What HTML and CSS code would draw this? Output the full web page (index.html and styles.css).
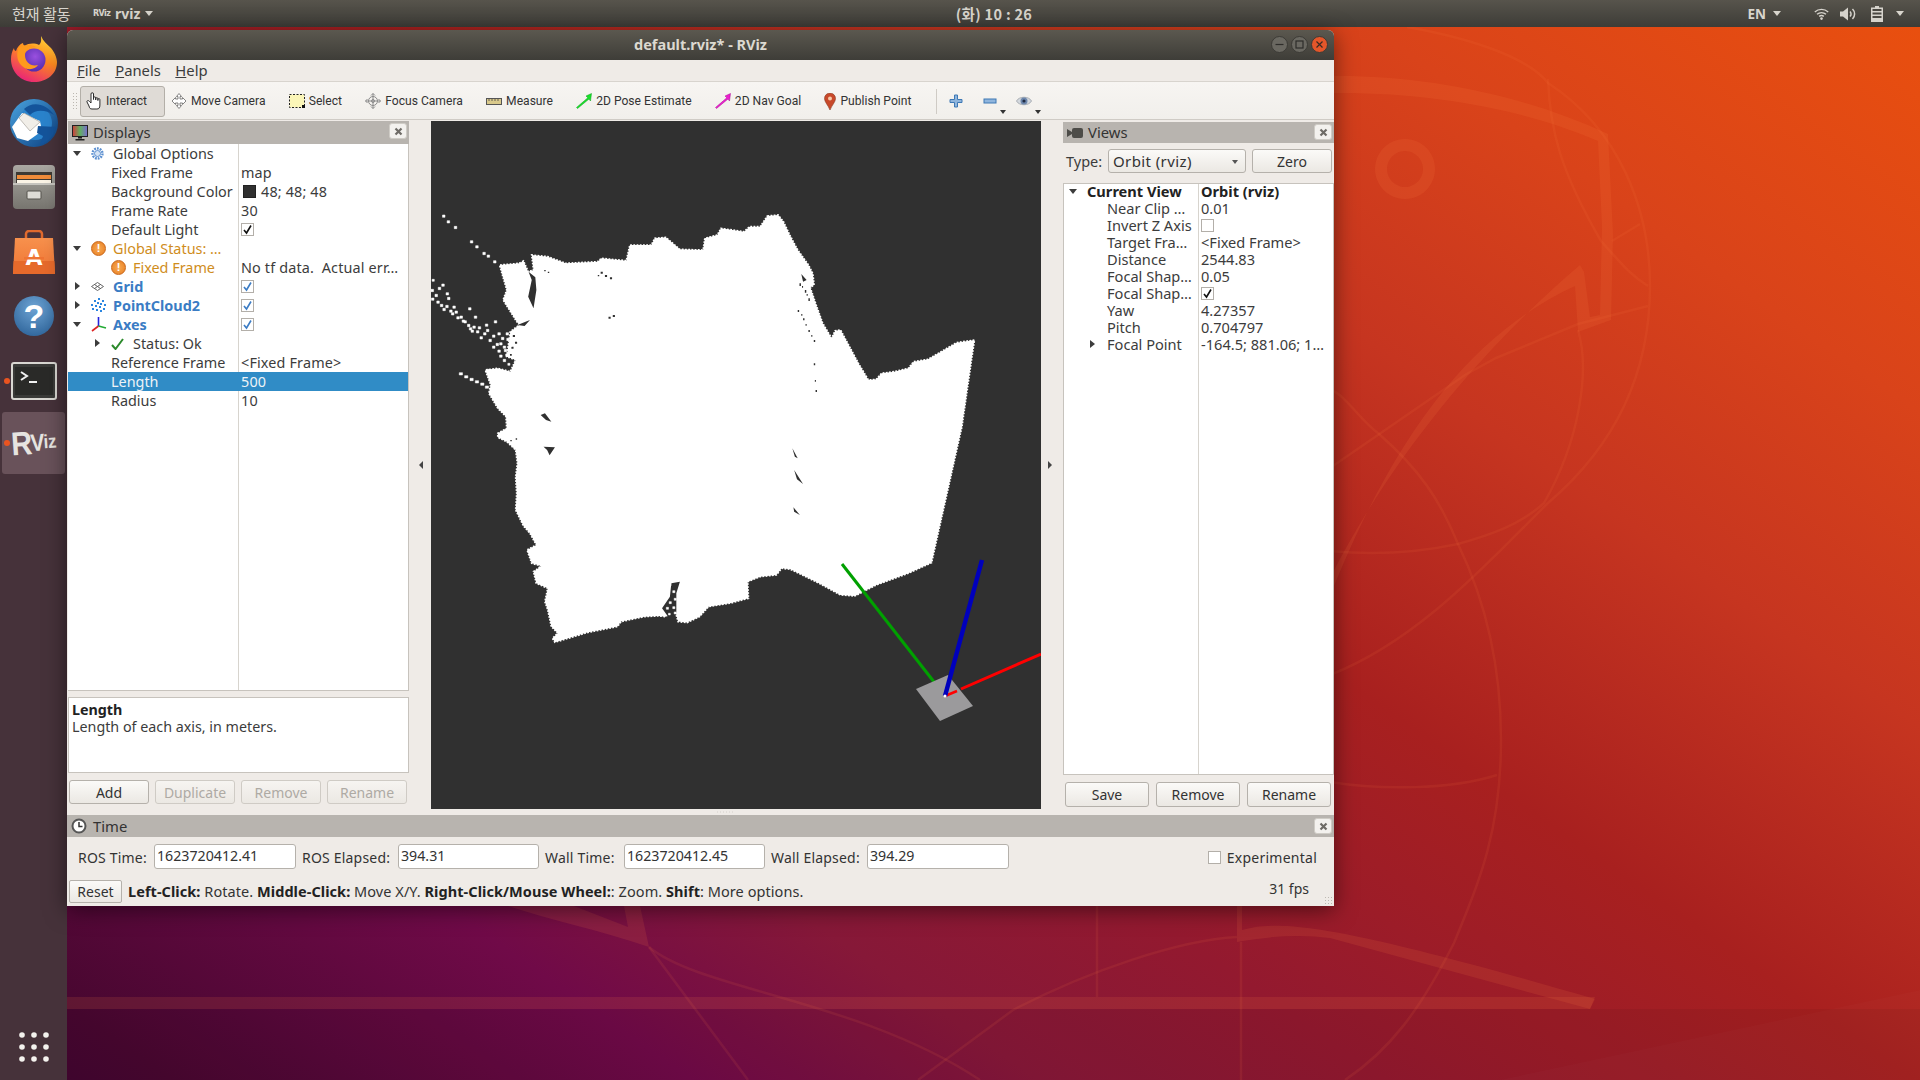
FILE: index.html
```html
<!DOCTYPE html>
<html lang="en">
<head>
<meta charset="utf-8">
<title>RViz</title>
<link rel="stylesheet" href="styles.css">
</head>
<body>
<svg class="wall" viewBox="0 0 1920 1080" width="1920" height="1080" aria-hidden="true">
  <rect x="67" y="1009" width="1853" height="71" fill="rgba(0,0,0,.05)"/>
  <path d="M1920 990L1500 1080H1920z" fill="rgba(255,255,255,.015)"/>
  <g fill="rgba(255,130,70,.13)">
    <path d="M1100 120C1280 50 1470 70 1608 134L1613 234L1611 320L1578 332L1575 286C1480 330 1400 420 1330 596L1200 640L1330 578C1390 460 1480 350 1580 265L1584 272L1590 317L1600 315L1602 227L1598 141C1480 90 1290 70 1100 130z"/>
    <path d="M508 906C560 880 600 880 574 906L628 927L624 906H640L649 947C600 930 550 920 508 906z"/>
    <path d="M1237 906H1242V930C1280 920 1330 922 1595 999L1590 1009L1330 938C1300 934 1270 936 1237 942z"/>
    <path d="M67 997H1595L1590 1009H67z"/>
    <path fill-rule="evenodd" d="M1405 139a30 30 0 1 0 .01 0zM1405 151a18 18 0 1 1 -.01 0z"/>
  </g>
  <g fill="none" stroke="rgba(255,130,70,.1)" stroke-width="2.5">
    <path d="M1407 27C1480 40 1530 60 1548 83C1620 130 1650 210 1650 286C1650 380 1610 450 1548 503C1490 560 1420 640 1330 675"/>
    <path d="M1330 389C1345 395 1360 420 1379 434C1420 470 1440 500 1458 544C1490 610 1501 680 1501 740C1501 830 1480 880 1454 943C1420 1010 1390 1050 1345 1080"/>
    <path d="M1548 79C1550 130 1560 170 1601 241C1620 262 1630 275 1648 286"/>
    <path d="M1330 468L1465 375L1496 358L1578 324L1648 306"/>
    <path d="M1612 241L1640 224"/>
    <path d="M1578 330C1590 370 1580 440 1544 503C1520 525 1490 535 1458 544C1420 552 1380 556 1330 551"/>
    <path d="M1330 782C1380 790 1450 790 1497 775"/>
    <path d="M649 947L748 1080"/>
    <path d="M649 947C700 990 860 1000 980 1080"/>
    <path d="M1237 937C1180 940 1090 970 1013 1010L918 1080"/>
    <path d="M1097 906V997"/>
    <path d="M1241 942V1080"/>
  </g>
</svg>

<header class="topbar">
  <span class="top-activities">현재 활동</span>
  <span class="top-app-logo">RViz</span>
  <span class="top-app">rviz</span>
  <i class="tri-down"></i>
  <span class="top-clock">(화) 10 : 26</span>
  <span class="top-lang">EN</span>
  <i class="tri-down tri-lang"></i>
  <svg class="top-wifi" width="15" height="12" viewBox="0 0 15 12"><g fill="none" stroke="#d6d3cc" stroke-width="1.4"><path d="M.8 4a10 10 0 0 1 13.4 0"/><path d="M3 6.3a7 7 0 0 1 9 0"/><path d="M5.2 8.4a3.6 3.6 0 0 1 4.6 0"/></g><circle cx="7.5" cy="10.6" r="1.3" fill="#d6d3cc"/></svg>
  <svg class="top-vol" width="16" height="14" viewBox="0 0 16 14"><path d="M0 4.5h3L8 .5v13l-5-4H0z" fill="#d6d3cc"/><path d="M10 4.5a3.5 3.5 0 0 1 0 5M12.5 2a7 7 0 0 1 0 10" fill="none" stroke="#d6d3cc" stroke-width="1.5"/></svg>
  <svg class="top-bat" width="12" height="16" viewBox="0 0 12 16"><path d="M4 0h4v1.500h4V16H0V1.500h4z" fill="#d6d3cc"/><path d="M1.500 3h9v2h-9zM1.500 6.500h9v2h-9zM1.500 10h9v2h-9z" fill="#4a4842"/></svg>
  <i class="tri-down tri-sys"></i>
</header>

<nav class="dock">
  <a class="dock-item dock-first">
    <svg width="46" height="47" viewBox="0 0 46 47">
      <defs>
        <linearGradient id="ff1" x1="0.8" y1="0" x2="0.3" y2="1"><stop offset="0" stop-color="#ffd93a"/><stop offset=".45" stop-color="#ff8a1f"/><stop offset="1" stop-color="#e8217a"/></linearGradient>
        <radialGradient id="ff2" cx=".55" cy=".35" r=".7"><stop offset="0" stop-color="#9a50e0"/><stop offset="1" stop-color="#4f2aa8"/></radialGradient>
      </defs>
      <path d="M30 1c2 5 6 8 10 12 5 6 6 12 6 14 0 12-10 20-23 20C10 47 0 37 0 24c0-4 1-8 3-11 0 2 1 3 2 3 1-4 4-7 7-8 0 1 1 3 2 3 3-3 10-3 14-1 3-3 2-6 2-9z" fill="url(#ff1)"/>
      <circle cx="23" cy="25" r="11.500" fill="url(#ff2)"/>
      <path d="M8 12c4-2 12-3 17 0 -5 0-11 3-11 8 0 7 6 12 13 10 -3 5-12 6-17 0C6 26 5 18 8 12z" fill="#ff9a1d"/>
    </svg>
  </a>
  <a class="dock-item">
    <svg width="48" height="48" viewBox="0 0 48 48">
      <defs><linearGradient id="tb1" x1="0" y1="0" x2="1" y2="1"><stop offset="0" stop-color="#4aa3df"/><stop offset="1" stop-color="#0b3f80"/></linearGradient></defs>
      <circle cx="24" cy="24" r="24" fill="url(#tb1)"/>
      <circle cx="25" cy="24" r="17" fill="#2a83cc"/>
      <path d="M14 10C22 2 36 4 44 16 36 11 26 10 20 16z" fill="#14549b"/>
      <path d="M2 28L12 14l18 8 2 10-7 5-7 5-11-3z" fill="#fff"/>
      <path d="M9 19l11 13 10-9-16-9z" fill="#f1eee8" stroke="#a9a59e" stroke-width=".7"/>
      <path d="M28 27l18 1c-2 9-8 15-16 18l3-9-6-3z" fill="#14549b"/>
    </svg>
  </a>
  <a class="dock-item">
    <svg width="42" height="44" viewBox="0 0 42 44">
      <defs><linearGradient id="fc1" x1="0" y1="0" x2="0" y2="1"><stop offset="0" stop-color="#aaa8a2"/><stop offset="1" stop-color="#77756f"/></linearGradient></defs>
      <rect width="42" height="44" rx="4" fill="url(#fc1)"/>
      <rect x="3" y="7" width="36" height="13" fill="#3d3a35"/>
      <rect x="4" y="10" width="34" height="4" fill="#f08c3a"/>
      <rect x="4" y="15" width="34" height="4" fill="#fbf4e6"/>
      <rect x="0" y="18" width="42" height="2" fill="#c6c4be"/>
      <rect x="14" y="26" width="14" height="8" rx="1" fill="#dedcd6" stroke="#55534d"/>
    </svg>
  </a>
  <a class="dock-item">
    <svg width="42" height="44" viewBox="0 0 42 44">
      <defs><linearGradient id="sw1" x1="0" y1="0" x2="0" y2="1"><stop offset="0" stop-color="#f7914d"/><stop offset="1" stop-color="#ef7433"/></linearGradient></defs>
      <path d="M13 9V4a3 3 0 0 1 3-3h10a3 3 0 0 1 3 3v5" fill="none" stroke="#e06a2e" stroke-width="2.500"/>
      <path d="M2 8h38l2 36H0z" fill="url(#sw1)"/>
      <path d="M.6 31h40.800l.6 13H0z" fill="#e66a2b"/>
      <text x="21" y="35" class="sw-a">A</text>
      <rect x="11" y="27" width="20" height="2.500" fill="#ef7433"/>
    </svg>
  </a>
  <a class="dock-item">
    <svg width="40" height="40" viewBox="0 0 40 40">
      <defs><radialGradient id="hp1" cx=".5" cy=".3" r=".8"><stop offset="0" stop-color="#6ea4d4"/><stop offset="1" stop-color="#2a6096"/></radialGradient></defs>
      <circle cx="20" cy="20" r="20" fill="url(#hp1)"/>
      <text x="20" y="32" class="hp-q">?</text>
    </svg>
  </a>
  <a class="dock-item dock-running">
    <svg width="46" height="38" viewBox="0 0 46 38">
      <rect x="1" y="1" width="44" height="36" rx="2" fill="#3a3a38" stroke="#d9d7d2" stroke-width="2"/>
      <rect x="4" y="5" width="38" height="28" fill="#2a2a28"/>
      <path d="M10 10l6 4-6 4" fill="none" stroke="#f1f1f1" stroke-width="2"/>
      <path d="M18 20h8" stroke="#f1f1f1" stroke-width="2"/>
    </svg>
  </a>
  <a class="dock-item dock-running dock-active">
    <span class="rviz-logo"><b class="rv-r">R</b><b class="rv-v">V</b><b class="rv-iz">iz</b></span>
  </a>
  <a class="dock-apps">
    <svg width="30" height="30" viewBox="0 0 30 30"><g fill="#f4f2ee"><circle cx="3" cy="3" r="2.800"/><circle cx="15" cy="3" r="2.800"/><circle cx="27" cy="3" r="2.800"/><circle cx="3" cy="15" r="2.800"/><circle cx="15" cy="15" r="2.800"/><circle cx="27" cy="15" r="2.800"/><circle cx="3" cy="27" r="2.800"/><circle cx="15" cy="27" r="2.800"/><circle cx="27" cy="27" r="2.800"/></g></svg>
  </a>
</nav>

<main class="window">
  <div class="titlebar">
    <span class="title">default.rviz* - RViz</span>
    <span class="wbtns">
      <svg width="17" height="17" viewBox="0 0 17 17"><circle cx="8.500" cy="8.500" r="8" fill="#6a6861" stroke="#3c3b36"/><path d="M4.500 8.500h8" stroke="#2e2d2a" stroke-width="1.200"/></svg>
      <svg width="17" height="17" viewBox="0 0 17 17"><circle cx="8.500" cy="8.500" r="8" fill="#6a6861" stroke="#3c3b36"/><rect x="5" y="5" width="7" height="7" fill="none" stroke="#2e2d2a" stroke-width="1.200"/></svg>
      <svg width="17" height="17" viewBox="0 0 17 17"><circle cx="8.500" cy="8.500" r="8" fill="#e4562a" stroke="#3c3b36"/><path d="M5.500 5.500l6 6m0-6l-6 6" stroke="#3b2a22" stroke-width="1.200"/></svg>
    </span>
  </div>

  <div class="menubar">
    <span class="menu"><u>F</u>ile</span>
    <span class="menu"><u>P</u>anels</span>
    <span class="menu"><u>H</u>elp</span>
  </div>

  <div class="toolbar">
    <i class="grip"></i>
    <span class="tool tool-on">
      <svg width="16" height="18" viewBox="0 0 16 18"><path d="M5 9V2a1.200 1.200 0 0 1 2.500 0v5.500V6a1.100 1.100 0 0 1 2.200 0v2V6.800a1.100 1.100 0 0 1 2.200 0V8.500V7.600a1 1 0 0 1 2 0V13c0 3-1 4-3 4H6c-2 0-2.500-1-3-3L1 10c-.5-1.500 1.500-2 2.500-.5L5 11z" fill="#fff" stroke="#2a2a2a" stroke-width="1"/></svg>
      Interact
    </span>
    <span class="tool">
      <svg width="16" height="16" viewBox="0 0 16 16"><g fill="#fff" stroke="#777" stroke-width=".9"><path d="M8 .5l2.500 3H9v2.500h2.500V4.500l3.500 3.500-3.500 3.500V10H9v2.500h1.500L8 15.500l-2.500-3H7V10H4.500v1.500L1 8l3.500-3.500V6H7V3.500H5.500z"/></g></svg>
      Move Camera
    </span>
    <span class="tool">
      <svg width="16" height="14" viewBox="0 0 16 14"><rect x=".5" y=".5" width="15" height="13" fill="#fbf6b8" stroke="#222" stroke-dasharray="2 1.500"/><path d="M13 11h3v3h-3z" fill="#111"/></svg>
      Select
    </span>
    <span class="tool">
      <svg width="16" height="16" viewBox="0 0 16 16"><g fill="none" stroke="#8a8a8a" stroke-width="1"><circle cx="8" cy="8" r="4.500"/><circle cx="8" cy="8" r="1.500"/><path d="M8 .5v15M.5 8h15"/><path d="M6 2.500L8 .5l2 2M6 13.500l2 2 2-2M2.500 6L.5 8l2 2M13.500 6l2 2-2 2"/></g></svg>
      Focus Camera
    </span>
    <span class="tool">
      <svg width="16" height="7" viewBox="0 0 16 7"><rect x=".5" y=".5" width="15" height="6" fill="#d9c98b" stroke="#555"/><path d="M3 1v2M6 1v2M9 1v2M12 1v2" stroke="#444" stroke-width=".8"/></svg>
      Measure
    </span>
    <span class="tool">
      <svg width="16" height="16" viewBox="0 0 16 16"><path d="M15.500.5L10 3l1.800 1.800L.5 14.500l1 1L13 6l1.500 2z" fill="#17e22a" stroke="#0f9a1c" stroke-width=".5"/></svg>
      2D Pose Estimate
    </span>
    <span class="tool">
      <svg width="16" height="16" viewBox="0 0 16 16"><path d="M15.500.5L10 3l1.800 1.800L.5 14.500l1 1L13 6l1.500 2z" fill="#ee1dd0" stroke="#a50f90" stroke-width=".5"/></svg>
      2D Nav Goal
    </span>
    <span class="tool">
      <svg width="12" height="17" viewBox="0 0 12 17"><path d="M6 17C4 12 .5 9 .5 5.500a5.500 5.500 0 0 1 11 0C11.500 9 8 12 6 17z" fill="#c8492a" stroke="#8a3a22" stroke-width=".6"/><circle cx="6" cy="5.500" r="2" fill="#f6c9a8"/></svg>
      Publish Point
    </span>
    <i class="tb-sep"></i>
    <svg class="tb-plus" width="14" height="14" viewBox="0 0 14 14"><path d="M5.500 1h3v4.500H13v3H8.500V13h-3V8.500H1v-3h4.500z" fill="#8fb5dd" stroke="#3e78b4"/></svg>
    <svg class="tb-minus" width="14" height="14" viewBox="0 0 14 14"><rect x="1" y="5" width="12" height="4" fill="#8fb5dd" stroke="#3e78b4"/></svg>
    <i class="tri-small"></i>
    <svg class="tb-eye" width="16" height="12" viewBox="0 0 16 12"><path d="M.5 6C3 1 13 1 15.500 6 13 11 3 11 .5 6z" fill="#d3d8de" stroke="#a8adb3"/><circle cx="8" cy="6" r="3.500" fill="#6d87ad"/><circle cx="8" cy="6" r="1.600" fill="#1e2a42"/></svg>
    <i class="tri-small"></i>
  </div>

  <div class="workspace">
    <section class="left-panel">
      <div class="dock-head head-left">
        <svg width="16" height="16" viewBox="0 0 16 16"><defs><linearGradient id="mon" x1="0" y1="0" x2="1" y2="0"><stop offset="0" stop-color="#d33a3a"/><stop offset=".5" stop-color="#60b060"/><stop offset="1" stop-color="#7a6ad0"/></linearGradient></defs><rect x=".5" y=".5" width="15" height="11" fill="url(#mon)" stroke="#222"/><path d="M6 12h4v1.500H6zM3.500 14h9v1.500h-9z" fill="#222"/></svg>
        <span class="head-text">Displays</span>
        <span class="close-x"><svg width="9" height="9" viewBox="0 0 9 9"><path d="M1.500 1.500l6 6m0-6l-6 6" stroke="#6e6b66" stroke-width="2.200"/></svg></span>
      </div>
      <div class="tree tree-displays">
        <div class="row"><div class="n"><i class="ar dn"></i><span class="ic"><svg width="13" height="13" viewBox="0 0 13 13"><circle cx="6.500" cy="6.500" r="5" fill="none" stroke="#5b8fd0" stroke-width="2.400" stroke-dasharray="1.800 1"/><circle cx="6.500" cy="6.500" r="3" fill="#d5e3f4" stroke="#5b8fd0"/></svg></span>Global Options</div><div class="v"></div></div>
        <div class="row"><div class="n p">Fixed Frame</div><div class="v">map</div></div>
        <div class="row"><div class="n p">Background Color</div><div class="v"><i class="swatch"></i>48; 48; 48</div></div>
        <div class="row"><div class="n p">Frame Rate</div><div class="v">30</div></div>
        <div class="row"><div class="n p">Default Light</div><div class="v"><i class="cb"><svg width="11" height="11" viewBox="0 0 11 11"><path d="M2 6l2.500 3L9 1.500" fill="none" stroke="#111" stroke-width="1.600"/></svg></i></div></div>
        <div class="row warn"><div class="n"><i class="ar dn"></i><span class="ic"><i class="warn-ic">!</i></span>Global Status: …</div><div class="v"></div></div>
        <div class="row warn"><div class="n l2"><span class="ar-blank"></span><span class="ic"><i class="warn-ic">!</i></span>Fixed Frame</div><div class="v v-dark">No tf data.&nbsp; Actual err…</div></div>
        <div class="row blue"><div class="n"><i class="ar rt"></i><span class="ic"><svg width="13" height="9" viewBox="0 0 13 9"><path d="M6.500.5L12.500 4.500 6.500 8.500.5 4.500zM3.500 2.500l6 4M9.500 2.500l-6 4" fill="none" stroke="#555" stroke-width=".9"/></svg></span>Grid</div><div class="v"><i class="cb"><svg width="11" height="11" viewBox="0 0 11 11"><path d="M2 6l2.500 3L9 1.500" fill="none" stroke="#3c7cc4" stroke-width="1.600"/></svg></i></div></div>
        <div class="row blue"><div class="n"><i class="ar rt"></i><span class="ic"><svg width="15" height="15" viewBox="0 0 15 15"><path d="M7 0h2v2H7zM3 2h2v2H3zM11 2h2v2h-2zM6 4h2v2H6zM0 6h2v2H0zM9 5h2v2H9zM13 6h2v2h-2zM4 7h2v2H4zM8 8h2v2H8zM1 10h2v2H1zM12 10h2v2h-2zM5 11h2v2H5zM9 12h2v2H9z" fill="#2b86e0"/></svg></span>PointCloud2</div><div class="v"><i class="cb"><svg width="11" height="11" viewBox="0 0 11 11"><path d="M2 6l2.500 3L9 1.500" fill="none" stroke="#3c7cc4" stroke-width="1.600"/></svg></i></div></div>
        <div class="row blue"><div class="n"><i class="ar dn"></i><span class="ic"><svg width="16" height="15" viewBox="0 0 16 15"><path d="M7.500 9V0" stroke="#2222dd" stroke-width="1.600"/><path d="M7.500 9L1 14" stroke="#dd2222" stroke-width="1.600"/><path d="M7.500 9L15 11" stroke="#22aa33" stroke-width="1.600"/></svg></span>Axes</div><div class="v"><i class="cb"><svg width="11" height="11" viewBox="0 0 11 11"><path d="M2 6l2.500 3L9 1.500" fill="none" stroke="#3c7cc4" stroke-width="1.600"/></svg></i></div></div>
        <div class="row"><div class="n l2"><i class="ar rt"></i><span class="ic"><svg width="13" height="12" viewBox="0 0 13 12"><path d="M1 7l3.500 4L12 1" fill="none" stroke="#2c8a2c" stroke-width="2"/></svg></span>Status: Ok</div><div class="v"></div></div>
        <div class="row"><div class="n p">Reference Frame</div><div class="v">&lt;Fixed Frame&gt;</div></div>
        <div class="row sel"><div class="n p">Length</div><div class="v">500</div></div>
        <div class="row"><div class="n p">Radius</div><div class="v">10</div></div>
      </div>
      <div class="desc"><b>Length</b><br>Length of each axis, in meters.</div>
      <div class="btn-row btn-row-left">
        <span class="btn">Add</span>
        <span class="btn off">Duplicate</span>
        <span class="btn off">Remove</span>
        <span class="btn off">Rename</span>
      </div>
    </section>

    <div class="gutter"><i class="tri-left"></i></div>

    <div class="viewport">
      <svg viewBox="431 121 610 688" width="610" height="688">
        <rect x="431" y="121" width="610" height="688" fill="#303030"/>
        <g transform="translate(430 200) scale(.357 .3333)">
          <path fill="#fff" stroke="#fff" stroke-width="5" stroke-dasharray="5 4" d="M945 48L975 45 990 65 1010 110 1030 150 1060 195 1072 220 1076 255 1065 262 1080 310 1100 370 1125 415 1135 392 1150 390 1170 430 1200 490 1228 540 1250 538 1265 520 1300 515 1340 505 1355 485 1395 478 1440 450 1475 428 1525 420 1510 530 1490 680 1465 800 1440 920 1405 1088 1340 1120 1250 1155 1190 1188 1150 1185 1090 1150 1010 1108 985 1105 970 1125 925 1130 890 1145 892 1195 840 1210 780 1220 755 1250 720 1268 695 1265 685 1225 660 1250 640 1248 600 1250 535 1265 525 1280 440 1298 350 1327 343 1315 358 1300 340 1280 330 1230 322 1205 330 1165 298 1150 290 1115 312 1098 285 1090 272 1050 298 1035 280 1000 262 978 240 930 243 880 240 830 245 790 240 750 215 725 190 712 190 700 215 685 213 650 190 625 165 580 170 555 155 510 190 505 225 515 240 480 215 470 225 395 250 375 240 360 205 300 215 270 195 195 250 190 262 183 275 215 290 210 285 165 330 170 380 190 470 185 480 175 550 182 560 135 620 135 630 115 660 112 700 148 765 150 770 115 805 105 815 85 880 95 895 80 925 80z"/>
          <path fill="#303030" d="M276 215L295 232 298 270 290 325 275 290 285 240zM245 375L280 360 265 378zM310 645L322 640 340 665 325 660zM318 740L350 742 335 766 328 750zM1015 745L1030 775 1022 770zM1020 810L1045 852 1028 838zM1018 922L1036 945 1020 935zM700 1145L690 1180 690 1240 670 1255 650 1225 672 1190 676 1150zM1040 222L1055 240 1045 245zM478 215h6v6h-6zM490 225h6v6h-6zM504 232h6v6h-6zM500 350h6v6h-6zM512 345h6v6h-6zM1035 250h4v8h-4zM1050 270h4v8h-4zM1060 295h4v8h-4zM1030 330h4v6h-4zM1045 355h4v6h-4zM1060 390h4v6h-4zM1075 420h4v6h-4zM1075 490h4v6h-4zM1080 570h4v6h-4zM228 440h6v6h-6zM238 425h6v6h-6zM232 405h6v6h-6zM224 462h5v5h-5zM1042 258h3v5h-3zM1055 282h3v5h-3zM1040 342h3v5h-3zM1052 372h3v5h-3zM1068 405h3v5h-3zM1078 540h3v5h-3zM470 225h4v4h-4zM320 210h4v4h-4zM330 215h4v4h-4zM240 715h4v4h-4zM225 720h4v4h-4z"/>
          <path fill="#fff" stroke="#fff" stroke-width="1.500" d="M35 45h7v7h-7zM48 62h7v7h-7zM68 79h7v7h-7zM113 122h7v7h-7zM128 137h7v7h-7zM148 157h7v7h-7zM160 165h7v7h-7zM178 182h7v7h-7zM6 238h6v6H6zM33 252h7v7h-7zM23 262h7v7h-7zM3 268h7v7H3zM14 283h7v7h-7zM4 294h7v7H4zM45 278h7v7h-7zM19 303h7v7h-7zM49 292h7v7h-7zM44 316h7v7h-7zM29 313h7v7h-7zM64 318h7v7h-7zM70 333h7v7h-7zM108 323h7v7h-7zM124 348h7v7h-7zM84 348h7v7h-7zM95 362h7v7h-7zM105 373h7v7h-7zM120 378h7v7h-7zM155 372h7v7h-7zM180 362h7v7h-7zM130 392h7v7h-7zM150 398h7v7h-7zM190 398h7v7h-7zM213 398h7v7h-7zM165 418h7v7h-7zM195 428h7v7h-7zM175 438h7v7h-7zM208 448h7v7h-7zM205 478h7v7h-7zM82 518h9v7h-9zM97 527h9v7h-9zM112 535h9v7h-9zM127 542h9v7h-9zM142 549h9v7h-9zM155 558h9v7h-9zM60 338h7v7h-7zM75 350h7v7h-7zM115 390h7v7h-7zM140 410h7v7h-7zM185 430h7v7h-7zM36 325h7v7h-7zM55 330h7v7h-7zM90 360h7v7h-7zM110 383h7v7h-7zM135 380h7v7h-7zM158 388h7v7h-7zM175 405h7v7h-7zM200 412h7v7h-7zM190 450h7v7h-7zM215 415h7v7h-7zM222 432h7v7h-7zM205 438h7v7h-7zM212 462h7v7h-7zM195 465h7v7h-7zM218 490h6v6h-6zM670 1150h5v8h-5zM665 1180h6v6h-6zM680 1172h6v6h-6zM684 1195h6v6h-6zM670 1205h6v6h-6zM680 1220h6v6h-6zM662 1222h6v6h-6zM684 1236h6v6h-6zM668 1240h5v5h-5zM160 508h12v6h-12z"/>
        </g>
        <path d="M842 564L945 696" stroke="#00a000" stroke-width="3"/>
        <path d="M916 689L948 675 973 706 940 721z" fill="#9b9a9c"/>
        <path d="M945 696L957 691" stroke="#f00" stroke-width="2.500"/>
        <path d="M961 689L1041 654" stroke="#f00" stroke-width="3"/>
        <path d="M982 560L945 696" stroke="#0000bc" stroke-width="4.500"/>
        <circle cx="945" cy="696" r="1.500" fill="#fff"/>
      </svg>
      <i class="split-dots"></i>
    </div>

    <div class="gutter gutter-r"><i class="tri-right"></i></div>

    <section class="right-panel">
      <div class="dock-head head-right">
        <svg width="16" height="10" viewBox="0 0 16 10"><path d="M0 1l5 3V2a2 2 0 0 1 2-2h7a2 2 0 0 1 2 2v6a2 2 0 0 1-2 2H7a2 2 0 0 1-2-2V6L0 9z" fill="#4d4c48"/></svg>
        <span class="head-text">Views</span>
        <span class="close-x"><svg width="9" height="9" viewBox="0 0 9 9"><path d="M1.500 1.500l6 6m0-6l-6 6" stroke="#6e6b66" stroke-width="2.200"/></svg></span>
      </div>
      <div class="type-row">
        <span class="type-label">Type:</span>
        <span class="combo">Orbit (rviz)<i class="tri-combo"></i></span>
        <span class="btn zero">Zero</span>
      </div>
      <div class="tree tree-views">
        <div class="vrow vhead"><div class="vn"><i class="ar dn"></i>Current View</div><div class="vv">Orbit (rviz)</div></div>
        <div class="vrow"><div class="vn vp">Near Clip …</div><div class="vv">0.01</div></div>
        <div class="vrow"><div class="vn vp">Invert Z Axis</div><div class="vv"><i class="cb"></i></div></div>
        <div class="vrow"><div class="vn vp">Target Fra…</div><div class="vv">&lt;Fixed Frame&gt;</div></div>
        <div class="vrow"><div class="vn vp">Distance</div><div class="vv">2544.83</div></div>
        <div class="vrow"><div class="vn vp">Focal Shap…</div><div class="vv">0.05</div></div>
        <div class="vrow"><div class="vn vp">Focal Shap…</div><div class="vv"><i class="cb"><svg width="11" height="11" viewBox="0 0 11 11"><path d="M2 6l2.500 3L9 1.500" fill="none" stroke="#111" stroke-width="1.600"/></svg></i></div></div>
        <div class="vrow"><div class="vn vp">Yaw</div><div class="vv">4.27357</div></div>
        <div class="vrow"><div class="vn vp">Pitch</div><div class="vv">0.704797</div></div>
        <div class="vrow"><div class="vn vp2"><i class="ar rt"></i>Focal Point</div><div class="vv">-164.5; 881.06; 1…</div></div>
      </div>
      <div class="btn-row btn-row-right">
        <span class="btn">Save</span>
        <span class="btn">Remove</span>
        <span class="btn">Rename</span>
      </div>
    </section>
  </div>

  <div class="dock-head head-time">
    <svg width="16" height="16" viewBox="0 0 16 16"><circle cx="8" cy="8" r="6.500" fill="#fff" stroke="#555" stroke-width="2"/><path d="M8 4v4.500h3.500" fill="none" stroke="#333" stroke-width="1.500"/></svg>
    <span class="head-text">Time</span>
    <span class="close-x"><svg width="9" height="9" viewBox="0 0 9 9"><path d="M1.500 1.500l6 6m0-6l-6 6" stroke="#6e6b66" stroke-width="2.200"/></svg></span>
  </div>
  <div class="time-row">
    <span class="tlabel tfirst">ROS Time:</span><span class="tinput">1623720412.41</span>
    <span class="tlabel">ROS Elapsed:</span><span class="tinput">394.31</span>
    <span class="tlabel">Wall Time:</span><span class="tinput">1623720412.45</span>
    <span class="tlabel">Wall Elapsed:</span><span class="tinput">394.29</span>
    <span class="exp"><i class="cb cb-exp"></i>Experimental</span>
  </div>
  <div class="status-row">
    <span class="btn reset">Reset</span>
    <span class="status-text"><b>Left-Click:</b> Rotate. <b>Middle-Click:</b> Move X/Y. <b>Right-Click/Mouse Wheel:</b>: Zoom. <b>Shift</b>: More options.</span>
    <span class="fps">31 fps</span>
    <i class="size-grip"></i>
  </div>
</main>
</body>
</html>
```
FILE: styles.css
```css
* { box-sizing: border-box; }
html, body { margin: 0; width: 1920px; height: 1080px; overflow: hidden; }
body {
  position: relative;
  font-family: "Noto Sans", "Liberation Sans", sans-serif;
  font-size: 14px;
  color: #3c3c3c;
  background: linear-gradient(215deg, #ea500e 0%, #d9431a 17%, #c63520 30%, #a8201f 44.7%, #93192f 60%, #861838 70%, #700a48 80%, #480730 95%, #3f0530 100%);
}
i { font-style: normal; display: inline-block; }
.wall { position: absolute; left: 0; top: 0; }

/* top bar */
.topbar {
  position: absolute; left: 0; top: 0; width: 1920px; height: 27px;
  display: flex; align-items: center;
  background: linear-gradient(#57544c, #3d3c37);
  color: #d8d5cd; font-size: 14px; font-weight: 500;
}
.top-activities { margin-left: 12px; width: 81px; font-family: "Noto Sans CJK KR", "Noto Sans", sans-serif; font-size: 15px; font-weight: 400; white-space: nowrap; }
.top-app-logo { width: 22px; font: bold 8px "DejaVu Sans", sans-serif; letter-spacing: -.6px; }
.top-app { width: 30px; font-weight: 700; font-size: 14px; }
.tri-down { width: 0; height: 0; border-left: 4.5px solid transparent; border-right: 4.5px solid transparent; border-top: 5px solid #d8d5cd; }
.top-clock { position: absolute; left: 954px; width: 80px; text-align: center; font-weight: 600; font-size: 14.500px; letter-spacing: .3px; white-space: nowrap; font-family: "Noto Sans CJK KR", "Noto Sans", sans-serif; }
.top-lang { margin-left: auto; margin-right: 7px; font-weight: 700; font-size: 13.500px; }
.tri-lang { margin-right: 33px; }
.top-wifi { margin-right: 11px; }
.top-vol { margin-right: 15px; }
.top-bat { margin-right: 13px; }
.tri-sys { margin-right: 16px; }

/* dock */
.dock {
  position: absolute; left: 0; top: 27px; width: 67px; height: 1053px;
  display: flex; flex-direction: column; align-items: center;
  background: #46323a;
}
.dock-item { width: 63px; height: 64.500px; display: flex; align-items: center; justify-content: center; position: relative; flex: none; }
.dock-first { margin-top: -1px; }
.dock-running::before { content: ""; position: absolute; left: 2px; top: calc(50% - 3px); width: 6px; height: 6px; border-radius: 50%; background: #e95420; }
.dock-active { background: #69525a; border-radius: 3px; height: 62px; margin-top: -1px; }
.dock-apps { margin-top: auto; margin-bottom: 18px; line-height: 0; }
.sw-a { font: bold 22px "DejaVu Sans", sans-serif; fill: #fff; text-anchor: middle; }
.hp-q { font: bold 34px "Liberation Sans", sans-serif; fill: #fff; text-anchor: middle; }
.rviz-logo { display: flex; align-items: flex-end; font-family: "Liberation Sans", sans-serif; color: #e6e4e0; transform: rotate(-4deg) scaleX(.88); }
.rv-r { font-size: 33px; line-height: 30px; }
.rv-v { font-size: 24px; line-height: 30px; margin-left: -2px; }
.rv-iz { font-size: 19px; line-height: 30px; margin-left: -1px; }

/* window */
.window {
  position: absolute; left: 67px; top: 30px; width: 1267px; height: 876px;
  display: flex; flex-direction: column;
  background: #efebe7;
  border-radius: 6px 6px 0 0;
  box-shadow: 0 4px 22px rgba(0,0,0,.5);
}
.titlebar {
  height: 30px; flex: none; position: relative; display: flex; align-items: center; justify-content: center;
  background: linear-gradient(#5b584f, #3e3d38);
  border-radius: 6px 6px 0 0;
}
.title { color: #dcd9d0; font-weight: 700; font-size: 14.500px; padding-bottom: 2px; }
.wbtns { position: absolute; right: 6px; top: 6px; display: flex; gap: 3px; }

.menubar { height: 22px; flex: none; display: flex; align-items: center; gap: 14.500px; padding: 0 0 2px 10px; border-bottom: 1px solid #d8d4ce; font-size: 14.800px; background: #efebe7; }
.menu u { text-decoration-thickness: 1px; }

.toolbar {
  height: 38px; flex: none; display: flex; align-items: center;
  padding: 1px 0 0 5px; background: linear-gradient(#f7f5f2, #f1efeb);
  border-bottom: 1px solid #cfcbc5;
  font-family: Roboto, "Noto Sans", sans-serif;
  font-size: 12.100px;
  color: #333;
}
.grip { width: 5px; height: 18px; margin-right: 3px; background-image: radial-gradient(#bbb7b0 .8px, transparent 1px); background-size: 3px 3px; }
.tool { display: flex; align-items: center; gap: 4px; padding: 0 11.250px 0 0; margin-left: 12px; white-space: nowrap; height: 31px; }
.tool svg { flex: none; }
.tool-on { margin-left: 0; width: 85px; padding-left: 5px; gap: 4px; background: #dfdbd6; border: 1px solid #b3afa8; border-radius: 3px; margin-right: -6px; }
.tb-sep { width: 1px; height: 25px; background: #cfcbc5; margin-left: 13px; }
.tb-plus { margin-left: 12px; }
.tb-minus { margin-left: 20px; }
.tri-small { width: 0; height: 0; border-left: 3px solid transparent; border-right: 3px solid transparent; border-top: 4px solid #333; align-self: flex-end; margin-bottom: 5px; margin-left: 3px; }
.tb-eye { margin-left: 10px; }

/* workspace */
.workspace { height: 695px; flex: none; display: grid; grid-template-columns: 342px 22px 610px 22px 271px; }
.left-panel, .right-panel { display: flex; flex-direction: column; min-width: 0; }
.dock-head { display: flex; align-items: center; background: #b8b4af; flex: none; position: relative; }
.head-text { font-size: 14.800px; color: #333; margin-left: 5px; padding-bottom: 2px; }
.close-x { position: absolute; width: 18px; height: 16px; right: 2px; top: 2px; display: flex; align-items: center; justify-content: center; background: #f3f1ee; border: 1px solid #cfccc6; border-radius: 3px; }
.head-left { height: 23px; margin: 1px 0 0 1px; padding-left: 4px; }
.head-right { height: 21px; margin-top: 2px; padding-left: 4px; }
.head-right .close-x { right: 2px; }
.tree { background: #fff; border: 1px solid #c7c3bd; }
.tree-displays { height: 547px; margin-left: 1px; border-top: 0; border-left: 0; position: relative; font-size: 14.400px; background: linear-gradient(#d7d4ce, #d7d4ce) 170px 0 / 1px 100% no-repeat #fff; }
.row { display: grid; grid-template-columns: 170px 1fr; height: 19px; line-height: 19px; }
.n { display: flex; align-items: center; white-space: nowrap; }
.n.p { padding-left: 43px; }
.n.l2 { padding-left: 20px; }
.v { padding-left: 3px; display: flex; align-items: center; white-space: nowrap; letter-spacing: .15px; }
.ar { flex: none; width: 20px; height: 10px; position: relative; }
.ar::after { content: ""; position: absolute; width: 0; height: 0; }
.dn::after { left: 5px; top: 2px; border-left: 4.500px solid transparent; border-right: 4.500px solid transparent; border-top: 5px solid #3c3c3c; }
.rt::after { left: 7px; top: 0; border-top: 4.500px solid transparent; border-bottom: 4.500px solid transparent; border-left: 5px solid #3c3c3c; }
.ar-blank { width: 20px; flex: none; }
.ic { width: 25px; flex: none; display: flex; align-items: center; padding-left: 3px; }
.warn { color: #d08d1c; }
.v-dark { color: #3c3c3c; }
.warn-ic { width: 15px; height: 15px; border-radius: 50%; background: radial-gradient(#f8ab56, #e77d1e); border: 1px solid #c9661a; color: #fff; font: bold 11px/13px "Liberation Sans", sans-serif; text-align: center; }
.blue { color: #3a7cc4; font-weight: 700; }
.blue .v { font-weight: 400; }
.sel { background: #308cc6; color: #eef3f6; }
.cb { width: 13px; height: 13px; background: #fff; border: 1px solid #b3afa9; display: inline-flex; align-items: center; justify-content: center; flex: none; }
.swatch { width: 13px; height: 13px; margin: 0 5px 0 2px; background: #303030; border: 1px solid #222; }

.desc { margin: 6px 0 0 1px; height: 76px; background: #fff; border: 1px solid #c7c3bd; padding: 3px 3px; line-height: 17px; font-size: 14.300px; }
.desc b { color: #222; }
.btn-row { display: flex; margin-top: 7px; }
.btn-row-left { padding-left: 2px; gap: 6px; }
.btn-row-left .btn { width: 80px; }
.btn-row-left .off { width: 80px; }
.btn {
  height: 24px; display: flex; align-items: center; justify-content: center; flex: none;
  background: linear-gradient(#fbfaf8, #ebe8e3);
  border: 1px solid #b5b1ab; border-radius: 3px; font-size: 14px; color: #333;
}
.off { color: #aeaaa4; border-color: #cfcbc5; background: linear-gradient(#f6f4f1, #ebe8e3); }

.gutter { display: flex; align-items: center; justify-content: center; padding: 0 0 6px 2px; }
.gutter-r { padding: 0 4px 6px 0; }
.tri-left { width: 0; height: 0; border-top: 4px solid transparent; border-bottom: 4px solid transparent; border-right: 4px solid #444; }
.tri-right { width: 0; height: 0; border-top: 4px solid transparent; border-bottom: 4px solid transparent; border-left: 4px solid #444; }
.viewport { position: relative; padding-top: 1px; line-height: 0; }
.viewport svg { display: block; }
.split-dots { position: absolute; left: 285px; top: 691px; width: 18px; height: 2px; background-image: radial-gradient(#bcb8b2 .6px, transparent .8px); background-size: 3px 2px; }

.type-row { display: flex; align-items: center; height: 24px; margin-top: 6px; padding-left: 3px; }
.type-label { width: 42px; font-size: 14.500px; }
.combo { width: 138px; height: 24px; position: relative; display: flex; align-items: center; padding-left: 4px; background: linear-gradient(#fbfaf8, #ebe8e3); border: 1px solid #b5b1ab; border-radius: 3px; font-size: 15px; letter-spacing: .4px; color: #333; }
.tri-combo { position: absolute; right: 7px; top: 10px; width: 0; height: 0; border-left: 3.500px solid transparent; border-right: 3.500px solid transparent; border-top: 4px solid #555; }
.zero { width: 80px; margin-left: 6px; }
.tree-views { height: 592px; margin-top: 10px; padding-top: 0; background: linear-gradient(#d7d4ce, #d7d4ce) 134px 0 / 1px 100% no-repeat #fff; }
.vrow { display: grid; grid-template-columns: 135px 1fr; grid-template-rows: 15px; height: 17px; line-height: 15px; font-size: 14.600px; }
.vhead { font-weight: 700; color: #222; }
.vn { display: flex; align-items: center; white-space: nowrap; }
.vn .ar { width: 23px; }
.vp { padding-left: 43px; }
.vp2 { padding-left: 19px; }
.vp2 .ar { width: 24px; }
.vv { padding: 0 0 0 2px; display: flex; align-items: center; white-space: nowrap; }
.btn-row-right { margin-top: 7px; padding-left: 2px; gap: 7px; }
.btn-row-right .btn { width: 84px; height: 25px; }

.head-time { height: 22px; padding-left: 4px; }
.head-time .head-text { margin-left: 6px; padding-bottom: 0; }
.head-time .close-x { right: 2px; top: 3px; }
.time-row {
  flex: none; height: 39px; padding: 7px 0 8px 11px; display: grid; align-items: center;
  grid-template-columns: 76px 142px 102px 141px 85px 141px 102px 142px 1fr;
  font-size: 14px; color: #333;
}
.tlabel { padding-left: 6px; white-space: nowrap; letter-spacing: .2px; padding-top: 1px; }
.tfirst { padding-left: 0; }
.tinput { height: 25px; background: #fff; border: 1px solid #b5b1ab; border-radius: 3px; padding-left: 2px; line-height: 21px; font-size: 14.200px; }
.exp { justify-self: end; margin-right: 17px; display: flex; align-items: center; gap: 6px; letter-spacing: .25px; padding-top: 1px; }
.status-row { flex: 1; display: flex; align-items: flex-start; padding: 4px 0 0 2px; position: relative; font-size: 14px; color: #333; }
.reset { width: 53px; height: 23px; border-radius: 2px; }
.status-text { margin-left: 6px; line-height: 23px; white-space: nowrap; font-size: 14.500px; letter-spacing: .06px; }
.status-text b { color: #222; }
.fps { margin-left: auto; margin-right: 25px; line-height: 18px; }
.size-grip { position: absolute; right: 1px; bottom: 1px; width: 9px; height: 9px; background-image: radial-gradient(#bcb8b2 .7px, transparent 1px); background-size: 3px 3px; }
```
